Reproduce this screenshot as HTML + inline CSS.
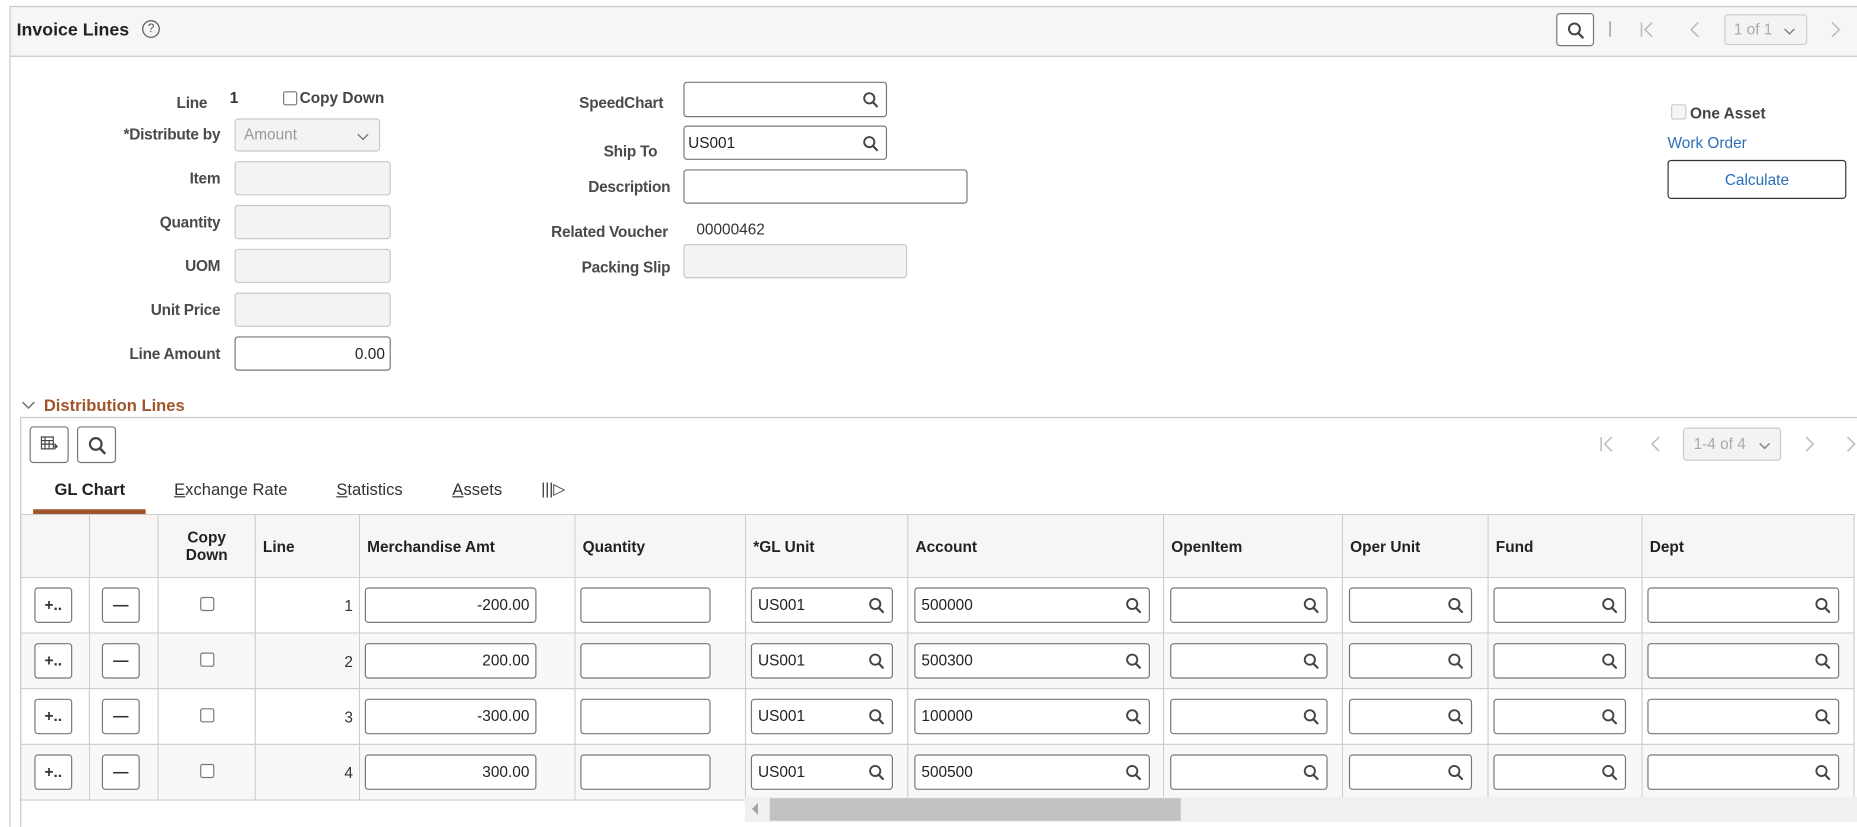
<!DOCTYPE html>
<html><head><meta charset="utf-8"><style>
html,body{margin:0;padding:0;background:#fff;overflow:hidden;width:1857px;height:827px}
#w{position:absolute;left:0;top:0;width:1568px;height:698px;transform:scale(1.18431);transform-origin:0 0;font-family:"Liberation Sans",Arial,sans-serif;color:#333}
.a{position:absolute}
.lbl{position:absolute;font-size:13px;font-weight:bold;color:#4a4a4a;text-align:right;white-space:nowrap;letter-spacing:-0.2px}
.box{position:absolute;border:1px solid #777;border-radius:3px;background:#fff;box-sizing:border-box;font-size:13px;color:#222}
.dis{background:#f3f3f2;border-color:#c9c9c9}
.q{position:absolute;right:6px;top:50%;margin-top:-7px;width:14px;height:14px}
table{position:absolute;left:17px;top:434px;border-collapse:collapse;table-layout:fixed}
td,th{border:1px solid #cfcdcb;padding:0;position:relative;font-size:13px}
th{background:#f7f6f5;text-align:left;font-weight:bold;color:#222;height:53px;padding-left:6px;box-sizing:border-box}
td{height:46px}
tr.e td{background:#f9f8f7}
.ib{position:absolute;top:8px;height:30px;border:1px solid #777;border-radius:3px;background:#fff;box-sizing:border-box;font-size:13px;color:#222;line-height:28px;padding:0 5px}
.btn{position:absolute;top:8px;width:32px;height:30px;border:1px solid #777;border-radius:3px;background:#fff;box-sizing:border-box;text-align:center;line-height:28px;font-weight:bold}
.cb{position:absolute;width:10px;height:10px;border:1px solid #777;border-radius:2px;background:#fff}
.tab{position:absolute;top:405px;font-size:14px;color:#333}
.nv{position:absolute}
</style></head><body><div id="w">
<svg width="0" height="0" style="position:absolute"><defs>
<symbol id="s" viewBox="0 0 14 14"><circle cx="6" cy="6" r="4.3" fill="none" stroke="#444" stroke-width="1.6"/><path d="M9 9.2L12.5 12.8" stroke="#444" stroke-width="1.8" stroke-linecap="round"/></symbol>
<symbol id="first" viewBox="0 0 14 16"><path d="M2 2v12M11 2L5 8l6 6" fill="none" stroke="#bbb" stroke-width="1.3"/></symbol>
<symbol id="prev" viewBox="0 0 14 16"><path d="M10 2L4 8l6 6" fill="none" stroke="#bbb" stroke-width="1.3"/></symbol>
<symbol id="next" viewBox="0 0 14 16"><path d="M4 2l6 6-6 6" fill="none" stroke="#bbb" stroke-width="1.3"/></symbol>
<symbol id="dn" viewBox="0 0 12 8"><path d="M1 1.5l5 5 5-5" fill="none" stroke="#777" stroke-width="1.3"/></symbol>
</defs></svg>
<div class="a" style="left:8px;top:5px;width:1560px;height:41px;background:#f7f6f5;border-top:1px solid #c8c8c8;border-bottom:1px solid #c8c8c8;border-left:1px solid #c8c8c8"></div>
<div class="a" style="left:8px;top:46px;width:1px;height:652px;background:#c8c8c8"></div>
<div class="a" style="left:14px;top:17px;font-size:15px;font-weight:bold;color:#222">Invoice Lines</div>
<div class="a" style="left:120px;top:17px;width:13px;height:13px;border:1px solid #555;border-radius:50%;font-size:10px;text-align:center;line-height:13px;color:#555">?</div>
<div class="a" style="left:1314px;top:11px;width:32px;height:28px;border:1px solid #777;border-radius:3px;background:#fff;box-sizing:border-box"><svg style="position:absolute;left:8px;top:6px" width="15" height="15"><use href="#s"/></svg></div>
<div class="a" style="left:1359px;top:18px;width:1px;height:13px;background:#888"></div>
<svg class="nv" style="left:1384px;top:17px" width="14" height="16"><use href="#first"/></svg>
<svg class="nv" style="left:1424px;top:17px" width="14" height="16"><use href="#prev"/></svg>
<div class="a" style="left:1456px;top:12px;width:70px;height:26px;border:1px solid #ccc;border-radius:3px;background:#f3f3f2;box-sizing:border-box;font-size:13px;color:#aaa;line-height:24px;padding-left:7px">1 of 1<svg style="position:absolute;right:9px;top:10px" width="10" height="7"><use href="#dn"/></svg></div>
<svg class="nv" style="left:1543px;top:17px" width="14" height="16"><use href="#next"/></svg>

<div class="lbl" style="right:1393px;top:79px">Line</div>
<div class="a" style="left:194px;top:75px;font-size:13px;font-weight:bold">1</div>
<div class="cb" style="left:239px;top:77px"></div>
<div class="a" style="left:253px;top:75px;font-size:13px;font-weight:bold;color:#444">Copy Down</div>
<div class="lbl" style="right:1382px;top:106px">*Distribute by</div>
<div class="box dis" style="left:198px;top:100px;width:123px;height:28px;line-height:26px;padding-left:7px;color:#999">Amount<svg style="position:absolute;right:8px;top:11px" width="11" height="7"><use href="#dn"/></svg></div>
<div class="lbl" style="right:1382px;top:143px">Item</div><div class="box dis" style="left:198px;top:136px;width:132px;height:29px"></div>
<div class="lbl" style="right:1382px;top:180px">Quantity</div><div class="box dis" style="left:198px;top:173px;width:132px;height:29px"></div>
<div class="lbl" style="right:1382px;top:217px">UOM</div><div class="box dis" style="left:198px;top:210px;width:132px;height:29px"></div>
<div class="lbl" style="right:1382px;top:254px">Unit Price</div><div class="box dis" style="left:198px;top:247px;width:132px;height:29px"></div>
<div class="lbl" style="right:1382px;top:291px">Line Amount</div><div class="box" style="left:198px;top:284px;width:132px;height:29px;text-align:right;line-height:27px;padding-right:4px">0.00</div>

<div class="lbl" style="right:1008px;top:79px">SpeedChart</div><div class="box" style="left:577px;top:69px;width:172px;height:30px"><svg class="q" width="14" height="14"><use href="#s"/></svg></div>
<div class="lbl" style="right:1013px;top:120px">Ship To</div><div class="box" style="left:577px;top:106px;width:172px;height:29px;line-height:27px;padding-left:3px">US001<svg class="q" width="14" height="14"><use href="#s"/></svg></div>
<div class="lbl" style="right:1002px;top:150px">Description</div><div class="box" style="left:577px;top:143px;width:240px;height:29px"></div>
<div class="lbl" style="right:1004px;top:188px">Related Voucher</div><div class="a" style="left:588px;top:186px;font-size:13px;color:#333">00000462</div>
<div class="lbl" style="right:1002px;top:218px">Packing Slip</div><div class="box dis" style="left:577px;top:206px;width:189px;height:29px"></div>

<div class="a" style="left:1411px;top:88px;width:11px;height:11px;border:1px solid #ccc;border-radius:2px;background:#f5f5f5"></div>
<div class="a" style="left:1427px;top:88px;font-size:13px;font-weight:bold;color:#444">One Asset</div>
<div class="a" style="left:1408px;top:113px;font-size:13px;color:#2a6ebb">Work Order</div>
<div class="a" style="left:1408px;top:135px;width:151px;height:33px;border:1px solid #333;border-radius:3px;box-sizing:border-box;text-align:center;line-height:31px;font-size:13px;color:#2a6ebb">Calculate</div>

<svg class="nv" style="left:18px;top:338px" width="12" height="8"><use href="#dn"/></svg>
<div class="a" style="left:37px;top:334px;font-size:14px;font-weight:bold;color:#a0562a">Distribution Lines</div>
<div class="a" style="left:17px;top:352px;width:1551px;height:1px;background:#c8c8c8"></div>
<div class="a" style="left:17px;top:352px;width:1px;height:346px;background:#c8c8c8"></div>
<div class="a" style="left:25px;top:360px;width:33px;height:31px;border:1px solid #777;border-radius:3px;box-sizing:border-box"><svg style="position:absolute;left:8px;top:7px" width="16" height="15" viewBox="0 0 16 15"><path d="M1 1h10v10H1zM1 4h10M1 7h10M4 1v10M7.5 4v7" fill="none" stroke="#444" stroke-width="1"/><path d="M12 6l3 3-3 3z" fill="#444"/></svg></div>
<div class="a" style="left:65px;top:360px;width:33px;height:31px;border:1px solid #777;border-radius:3px;box-sizing:border-box"><svg style="position:absolute;left:8px;top:7px" width="16" height="16"><use href="#s"/></svg></div>
<svg class="nv" style="left:1350px;top:367px" width="14" height="16"><use href="#first"/></svg>
<svg class="nv" style="left:1391px;top:367px" width="14" height="16"><use href="#prev"/></svg>
<div class="a" style="left:1421px;top:361px;width:83px;height:28px;border:1px solid #ccc;border-radius:3px;background:#f3f3f2;box-sizing:border-box;font-size:13px;color:#aaa;line-height:26px;padding-left:8px">1-4 of 4<svg style="position:absolute;right:8px;top:11px" width="10" height="7"><use href="#dn"/></svg></div>
<svg class="nv" style="left:1521px;top:367px" width="14" height="16"><use href="#next"/></svg>
<svg class="nv" style="left:1556px;top:367px" width="14" height="16"><use href="#next"/></svg>

<div class="tab" style="left:46px;font-weight:bold;color:#222">GL Chart</div>
<div class="tab" style="left:147px"><u>E</u>xchange Rate</div>
<div class="tab" style="left:284px"><u>S</u>tatistics</div>
<div class="tab" style="left:382px"><u>A</u>ssets</div>
<div class="tab" style="left:457px;font-size:13px">|||&#9655;</div>
<div class="a" style="left:28px;top:430px;width:95px;height:4px;background:#a0562a"></div>

<table>
<colgroup><col style="width:58px"><col style="width:58px"><col style="width:82px"><col style="width:88px"><col style="width:182px"><col style="width:144px"><col style="width:137px"><col style="width:216px"><col style="width:151px"><col style="width:123px"><col style="width:130px"><col style="width:179px"></colgroup>
<tr><th></th><th></th><th style="text-align:center;padding:0">Copy<br>Down</th><th>Line</th><th>Merchandise Amt</th><th>Quantity</th><th>*GL Unit</th><th>Account</th><th>OpenItem</th><th>Oper Unit</th><th>Fund</th><th>Dept</th></tr>
<tr><td><div class="btn" style="left:11px;font-size:13px">+..</div></td><td><div class="btn" style="left:10px">&#8212;</div></td><td><div class="cb" style="left:35px;top:16px"></div></td><td style="text-align:right;padding-right:5px">1</td><td><div class="ib" style="left:4px;width:145px;text-align:right">-200.00</div></td><td><div class="ib" style="left:4px;width:110px"></div></td><td><div class="ib" style="left:4px;width:120px">US001<svg class="q" width="14" height="14"><use href="#s"/></svg></div></td><td><div class="ib" style="left:5px;width:199px">500000<svg class="q" width="14" height="14"><use href="#s"/></svg></div></td><td><div class="ib" style="left:5px;width:133px"><svg class="q" width="14" height="14"><use href="#s"/></svg></div></td><td><div class="ib" style="left:5px;width:104px"><svg class="q" width="14" height="14"><use href="#s"/></svg></div></td><td><div class="ib" style="left:4px;width:112px"><svg class="q" width="14" height="14"><use href="#s"/></svg></div></td><td><div class="ib" style="left:4px;width:162px"><svg class="q" width="14" height="14"><use href="#s"/></svg></div></td></tr>
<tr class="e"><td><div class="btn" style="left:11px;font-size:13px">+..</div></td><td><div class="btn" style="left:10px">&#8212;</div></td><td><div class="cb" style="left:35px;top:16px"></div></td><td style="text-align:right;padding-right:5px">2</td><td><div class="ib" style="left:4px;width:145px;text-align:right">200.00</div></td><td><div class="ib" style="left:4px;width:110px"></div></td><td><div class="ib" style="left:4px;width:120px">US001<svg class="q" width="14" height="14"><use href="#s"/></svg></div></td><td><div class="ib" style="left:5px;width:199px">500300<svg class="q" width="14" height="14"><use href="#s"/></svg></div></td><td><div class="ib" style="left:5px;width:133px"><svg class="q" width="14" height="14"><use href="#s"/></svg></div></td><td><div class="ib" style="left:5px;width:104px"><svg class="q" width="14" height="14"><use href="#s"/></svg></div></td><td><div class="ib" style="left:4px;width:112px"><svg class="q" width="14" height="14"><use href="#s"/></svg></div></td><td><div class="ib" style="left:4px;width:162px"><svg class="q" width="14" height="14"><use href="#s"/></svg></div></td></tr>
<tr><td><div class="btn" style="left:11px;font-size:13px">+..</div></td><td><div class="btn" style="left:10px">&#8212;</div></td><td><div class="cb" style="left:35px;top:16px"></div></td><td style="text-align:right;padding-right:5px">3</td><td><div class="ib" style="left:4px;width:145px;text-align:right">-300.00</div></td><td><div class="ib" style="left:4px;width:110px"></div></td><td><div class="ib" style="left:4px;width:120px">US001<svg class="q" width="14" height="14"><use href="#s"/></svg></div></td><td><div class="ib" style="left:5px;width:199px">100000<svg class="q" width="14" height="14"><use href="#s"/></svg></div></td><td><div class="ib" style="left:5px;width:133px"><svg class="q" width="14" height="14"><use href="#s"/></svg></div></td><td><div class="ib" style="left:5px;width:104px"><svg class="q" width="14" height="14"><use href="#s"/></svg></div></td><td><div class="ib" style="left:4px;width:112px"><svg class="q" width="14" height="14"><use href="#s"/></svg></div></td><td><div class="ib" style="left:4px;width:162px"><svg class="q" width="14" height="14"><use href="#s"/></svg></div></td></tr>
<tr class="e"><td><div class="btn" style="left:11px;font-size:13px">+..</div></td><td><div class="btn" style="left:10px">&#8212;</div></td><td><div class="cb" style="left:35px;top:16px"></div></td><td style="text-align:right;padding-right:5px">4</td><td><div class="ib" style="left:4px;width:145px;text-align:right">300.00</div></td><td><div class="ib" style="left:4px;width:110px"></div></td><td><div class="ib" style="left:4px;width:120px">US001<svg class="q" width="14" height="14"><use href="#s"/></svg></div></td><td><div class="ib" style="left:5px;width:199px">500500<svg class="q" width="14" height="14"><use href="#s"/></svg></div></td><td><div class="ib" style="left:5px;width:133px"><svg class="q" width="14" height="14"><use href="#s"/></svg></div></td><td><div class="ib" style="left:5px;width:104px"><svg class="q" width="14" height="14"><use href="#s"/></svg></div></td><td><div class="ib" style="left:4px;width:112px"><svg class="q" width="14" height="14"><use href="#s"/></svg></div></td><td><div class="ib" style="left:4px;width:162px"><svg class="q" width="14" height="14"><use href="#s"/></svg></div></td></tr>
</table>
<div class="a" style="left:629px;top:673px;width:939px;height:21px;background:#f0f0f0"></div>
<div class="a" style="left:635px;top:678px;width:0;height:0;border-top:5px solid transparent;border-bottom:5px solid transparent;border-right:5px solid #a3a3a3"></div>
<div class="a" style="left:650px;top:674px;width:347px;height:19px;background:#c1c1c1"></div>
</div></body></html>
